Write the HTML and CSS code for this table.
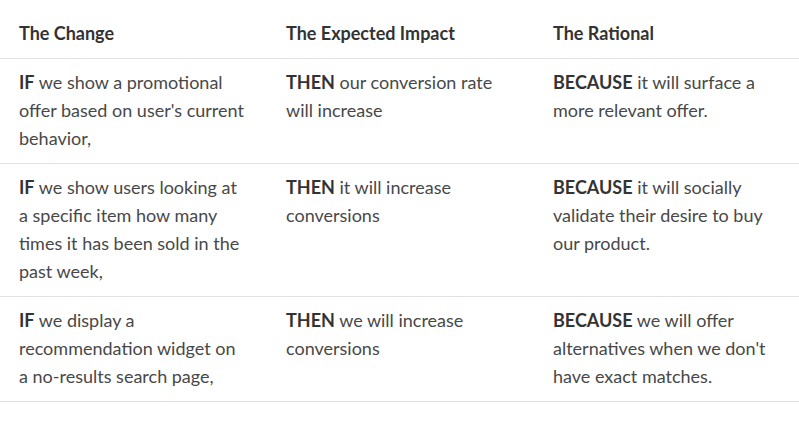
FILE: index.html
```html
<!DOCTYPE html>
<html>
<head>
<meta charset="utf-8">
<link rel="stylesheet" href="styles.css">
</head>
<body>
<table class="hyp">
  <thead>
    <tr>
      <th>The Change</th>
      <th>The Expected Impact</th>
      <th>The Rational</th>
    </tr>
  </thead>
  <tbody>
    <tr>
      <td><b>IF</b> we show a promotional offer based on user's current behavior,</td>
      <td><b>THEN</b> our conversion rate will increase</td>
      <td><b>BECAUSE</b> it will surface a more relevant offer.</td>
    </tr>
    <tr>
      <td><b>IF</b> we show users looking at a specific item how many times it has been sold in the past week,</td>
      <td><b>THEN</b> it will increase conversions</td>
      <td><b>BECAUSE</b> it will socially validate their desire to buy our product.</td>
    </tr>
    <tr>
      <td><b>IF</b> we display a recommendation widget on a no-results search page,</td>
      <td><b>THEN</b> we will increase conversions</td>
      <td><b>BECAUSE</b> we will offer alternatives when we don't have exact matches.</td>
    </tr>
  </tbody>
</table>
</body>
</html>
```
FILE: styles.css
```css
html, body {
  margin: 0;
  padding: 0;
  background: #fff;
  overflow: hidden;
}
.hyp {
  width: 801px;
  border-collapse: collapse;
  table-layout: fixed;
  font-family: "Lato", "Open Sans", sans-serif;
  font-size: 18px;
  line-height: 28px;
  color: #484848;
}
.hyp th {
  text-align: left;
  font-weight: 700;
  color: #333;
  padding: 19px 19px 11px 19px;
  border-bottom: 1px solid #e2e2e2;
}
.hyp td {
  vertical-align: top;
  padding: 9px 19px 11px 19px;
  border-bottom: 1px solid #e2e2e2;
}
.hyp b {
  font-weight: 700;
  color: #333;
}
```
